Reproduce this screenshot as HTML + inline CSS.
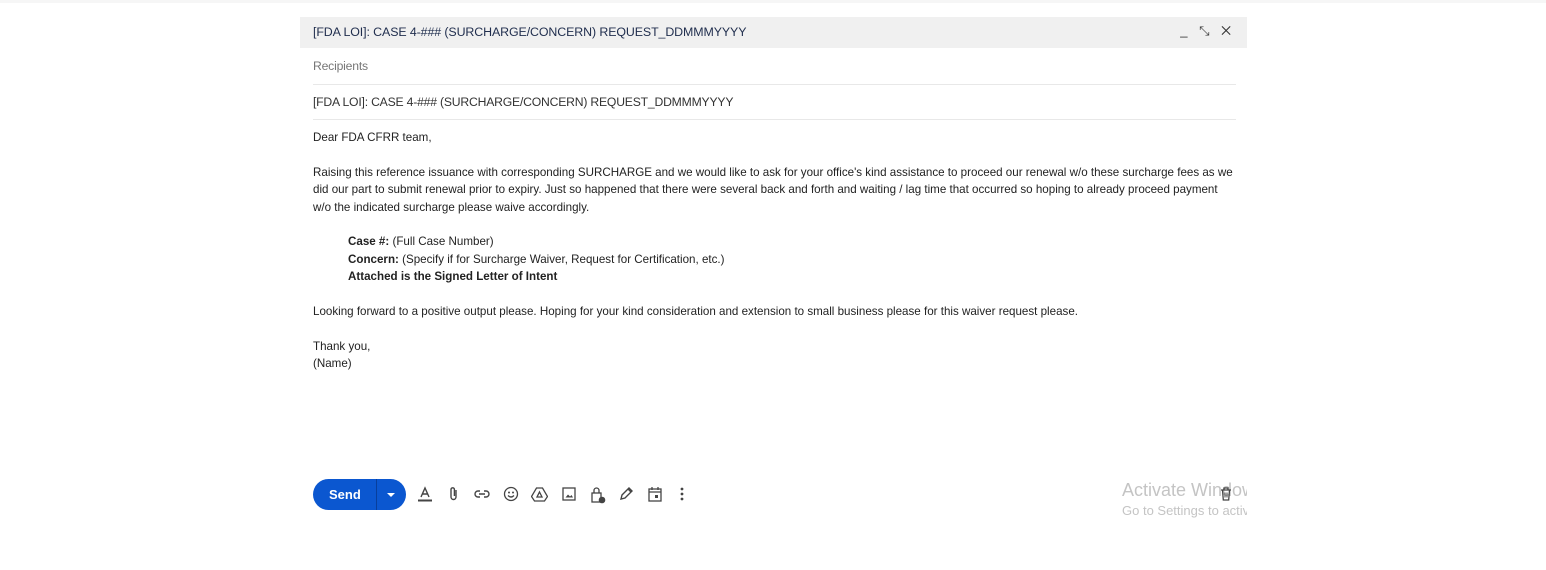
<!DOCTYPE html>
<html><head><style>
body{margin:0;width:1546px;height:570px;background:#fff;font-family:"Liberation Sans",Arial,sans-serif;position:relative;overflow:hidden}
.top{position:absolute;left:0;top:0;width:1546px;height:3px;background:#f6f6f6}
.hdr{position:absolute;left:300px;top:17px;width:947px;height:31px;background:#f0f0f0}
.hdr .t{position:absolute;left:13px;top:8px;font-size:12.4px;color:#1f2d4d;letter-spacing:-0.1px}
.hdr .ic{position:absolute;right:12px;top:6px;font-size:13px;color:#333;letter-spacing:4px}
.row{position:absolute;left:313px;width:923px;font-size:12.2px;border-bottom:1px solid #e8e8e8;letter-spacing:-0.2px}
.body{position:absolute;left:313px;top:129px;width:940px;font-size:11.6px;line-height:17.4px;color:#222}
.body p{margin:0 0 17.4px}
.nw{white-space:nowrap}
.ind{padding-left:35px}
.send{position:absolute;left:313px;top:479px;width:93px;height:31px;border-radius:16px;background:#0b57d0;color:#fff;font-size:13px;font-weight:bold}
.send span{position:absolute;left:16px;top:8px}
.send .d{position:absolute;left:63px;top:0;width:1px;height:31px;background:#083f9c}
.send .a{position:absolute;left:74px;top:14px;width:0;height:0;border-left:4px solid transparent;border-right:4px solid transparent;border-top:4px solid #fff}
.tools{position:absolute;left:417px;top:486px}
.tools svg{position:absolute;top:0}
.act{position:absolute;left:1122px;top:480px;color:#c4c4c4;width:125px;overflow:hidden;white-space:nowrap}
</style></head><body>
<div class="top"></div>
<div class="hdr"><div class="t">[FDA LOI]: CASE 4-### (SURCHARGE/CONCERN) REQUEST_DDMMMYYYY</div><div class="ic">_ ⤡ ✕</div></div>
<div class="row" style="top:59px;height:25px;color:#777">Recipients</div>
<div class="row" style="top:95px;height:24px;color:#333">[FDA LOI]: CASE 4-### (SURCHARGE/CONCERN) REQUEST_DDMMMYYYY</div>
<div class="body">
<p>Dear FDA CFRR team,</p>
<p class="nw">Raising this reference issuance with corresponding SURCHARGE and we would like to ask for your office's kind assistance to proceed our renewal w/o these surcharge fees as we<br>did our part to submit renewal prior to expiry. Just so happened that there were several back and forth and waiting / lag time that occurred so hoping to already proceed payment<br>w/o the indicated surcharge please waive accordingly.</p>
<p class="ind"><b>Case #:</b> (Full Case Number)<br><b>Concern:</b> (Specify if for Surcharge Waiver, Request for Certification, etc.)<br><b>Attached is the Signed Letter of Intent</b></p>
<p>Looking forward to a positive output please. Hoping for your kind consideration and extension to small business please for this waiver request please.</p>
<p>Thank you,<br>(Name)</p>
</div>
<div class="send"><span>Send</span><div class="d"></div><div class="a"></div></div>
<div class="tools">
<svg style="left:0" width="16" height="16" viewBox="0 0 16 16"><path d="M4 11L8 2l4 9M5.5 8h5" stroke="#444" stroke-width="1.4" fill="none"/><rect x="1" y="13.5" width="14" height="2" fill="#444"/></svg>
<svg style="left:30px" width="14" height="16" viewBox="0 0 14 16"><path d="M9 4v7a2.5 2.5 0 0 1-5 0V3.5a1.7 1.7 0 0 1 3.4 0V10" stroke="#444" stroke-width="1.4" fill="none"/></svg>
<svg style="left:57px" width="16" height="16" viewBox="0 0 16 16"><path d="M6 5H4a3 3 0 0 0 0 6h2M10 5h2a3 3 0 0 1 0 6h-2M5 8h6" stroke="#444" stroke-width="1.4" fill="none"/></svg>
<svg style="left:86px" width="16" height="16" viewBox="0 0 16 16"><circle cx="8" cy="8" r="6.5" stroke="#444" stroke-width="1.3" fill="none"/><circle cx="6" cy="6.5" r="1" fill="#444"/><circle cx="10" cy="6.5" r="1" fill="#444"/><path d="M5 9.5q3 3 6 0" stroke="#444" stroke-width="1.3" fill="none"/></svg>
<svg style="left:114px" width="17" height="16" viewBox="0 0 17 16"><path d="M5.5 2h6l5 8.5-3 4.5H3.5l-3-4.5z M8.5 6l2.5 5H6z" stroke="#444" stroke-width="1.3" fill="none"/></svg>
<svg style="left:144px" width="16" height="16" viewBox="0 0 16 16"><rect x="2" y="2" width="12" height="12" stroke="#444" stroke-width="1.3" fill="none"/><path d="M4.5 11.5l2.5-3 2 2 1.5-1.5 1.5 2.5z" fill="#444"/></svg>
<svg style="left:173px" width="16" height="18" viewBox="0 0 16 18"><rect x="2" y="7" width="9" height="9" stroke="#444" stroke-width="1.3" fill="none"/><path d="M4 7V4.5a2.5 2.5 0 0 1 5 0V7" stroke="#444" stroke-width="1.3" fill="none"/><circle cx="12" cy="14" r="3.3" fill="#444"/></svg>
<svg style="left:201px" width="16" height="16" viewBox="0 0 16 16"><path d="M3 13l1-4 7-7 3 3-7 7z M10 3l3 3" stroke="#444" stroke-width="1.4" fill="none"/></svg>
<svg style="left:230px" width="16" height="16" viewBox="0 0 16 16"><rect x="2" y="3" width="12" height="12" stroke="#444" stroke-width="1.3" fill="none"/><path d="M2 6h12M5 1v3M11 1v3" stroke="#444" stroke-width="1.3"/><rect x="8" y="9" width="3" height="3" fill="#444"/></svg>
<svg style="left:262px" width="6" height="16" viewBox="0 0 6 16"><circle cx="3" cy="3" r="1.4" fill="#444"/><circle cx="3" cy="8" r="1.4" fill="#444"/><circle cx="3" cy="13" r="1.4" fill="#444"/></svg>
</div>
<div class="act"><div style="font-size:18px">Activate Windows</div><div style="font-size:13px;margin-top:2px">Go to Settings to activate Windows.</div></div>
<svg style="position:absolute;left:1220px;top:487px" width="12" height="14" viewBox="0 0 12 14"><path d="M1 3h10M4 3V1h4v2M2.5 3l.8 10h5.4l.8-10" stroke="#444" stroke-width="1.3" fill="none"/><path d="M5 5.5v5M7 5.5v5" stroke="#444"/></svg>
</body></html>
